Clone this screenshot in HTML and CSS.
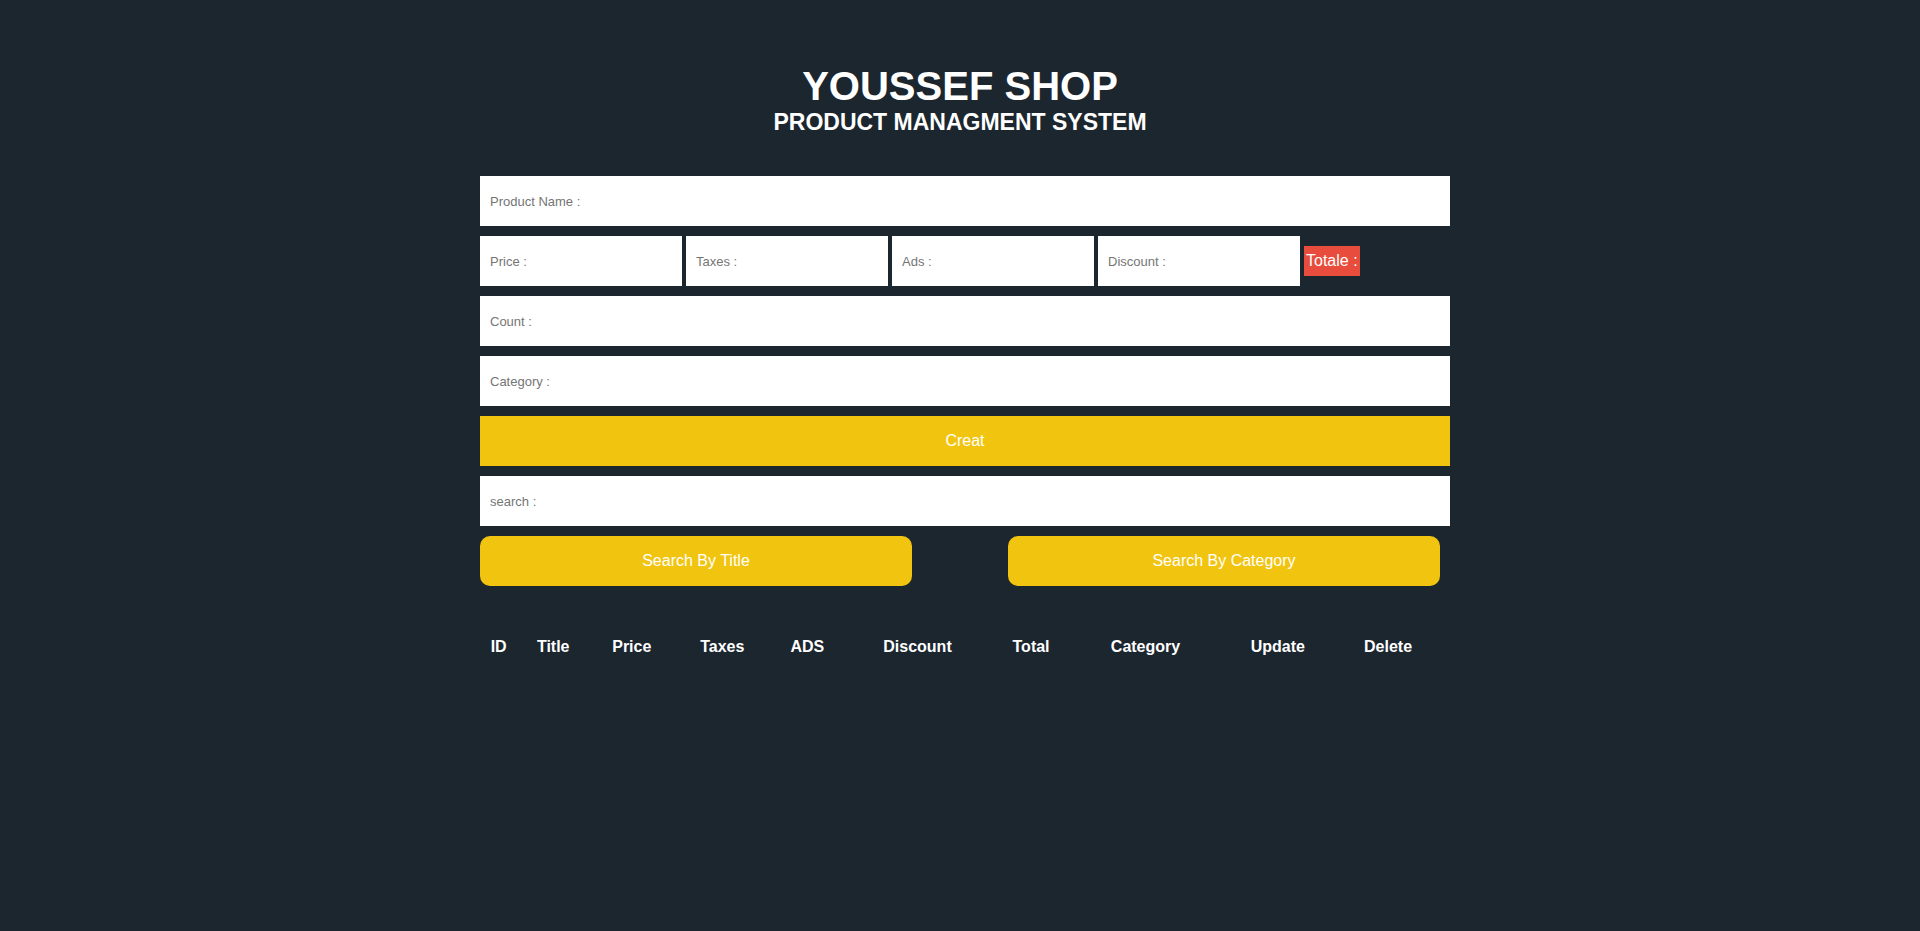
FILE: index.html
```html
<!DOCTYPE html>
<html lang="en">
<head>
<meta charset="utf-8">
<title>Youssef Shop</title>
<link rel="stylesheet" href="styles.css">
</head>
<body>
<main class="shop">
  <header class="head">
    <h1 class="head-title">YOUSSEF SHOP</h1>
    <h2 class="head-subtitle">PRODUCT MANAGMENT SYSTEM</h2>
  </header>
  <form class="fields">
    <input class="field" type="text" placeholder="Product Name :" aria-label="Product Name">
    <div class="prices">
      <input class="field" type="text" placeholder="Price :" aria-label="Price">
      <input class="field" type="text" placeholder="Taxes :" aria-label="Taxes">
      <input class="field" type="text" placeholder="Ads :" aria-label="Ads">
      <input class="field" type="text" placeholder="Discount :" aria-label="Discount">
      <output class="total">Totale :</output>
    </div>
    <input class="field" type="text" placeholder="Count :" aria-label="Count">
    <input class="field" type="text" placeholder="Category :" aria-label="Category">
    <button class="btn" type="button">Creat</button>
    <input class="field" type="text" placeholder="search :" aria-label="Search">
  </form>
  <div class="search-actions">
    <button class="btn btn-search" type="button">Search By Title</button>
    <button class="btn btn-search" type="button">Search By Category</button>
  </div>
  <table class="products">
    <thead>
      <tr>
        <th>ID</th><th>Title</th><th>Price</th><th>Taxes</th><th>ADS</th><th>Discount</th><th>Total</th><th>Category</th><th>Update</th><th>Delete</th>
      </tr>
    </thead>
    <tbody></tbody>
  </table>
</main>
</body>
</html>
```
FILE: styles.css
```css
* {
  box-sizing: border-box;
}

body {
  margin: 0;
  background: #1c262f;
  color: #fff;
  font-family: "Liberation Sans", Arial, sans-serif;
  font-size: 16px;
}

.shop {
  width: 50%;
  margin: 0 auto;
  padding-top: 64px;
}

.head {
  text-align: center;
  text-transform: uppercase;
  margin-bottom: 40px;
}

.head-title,
.head-subtitle {
  margin: 0;
}

.head-title {
  font-size: 40px;
  line-height: 44px;
}

.head-subtitle {
  font-size: 23px;
  line-height: 28px;
}

/* Fields run 10px past the right edge of the column. */
.fields {
  display: grid;
  gap: 10px;
  margin-right: -10px;
}

.field {
  width: 100%;
  height: 50px;
  padding: 0 0 0 10px;
  border: none;
  outline: none;
  background: #fff;
  font-family: inherit;
  font-size: 13px;
}

.field::placeholder {
  color: #757575;
}

.prices {
  display: flex;
  align-items: center;
  gap: 4px;
}

.prices .field {
  width: calc(20% + 8px);
}

.total {
  padding: 5px 2px;
  background: #e74c3c;
  line-height: 20px;
}

.btn {
  height: 50px;
  padding: 0;
  border: none;
  background: #f1c40f;
  color: #fff;
  font-family: inherit;
  font-size: 16px;
  cursor: pointer;
}

.search-actions {
  display: flex;
  justify-content: space-between;
  margin-top: 10px;
}

.btn-search {
  width: 45%;
  border-radius: 10px;
}

.products {
  width: 100%;
  margin-top: 50px;
  border-collapse: collapse;
  text-align: center;
}

.products th {
  padding: 2px 1px;
}
```
